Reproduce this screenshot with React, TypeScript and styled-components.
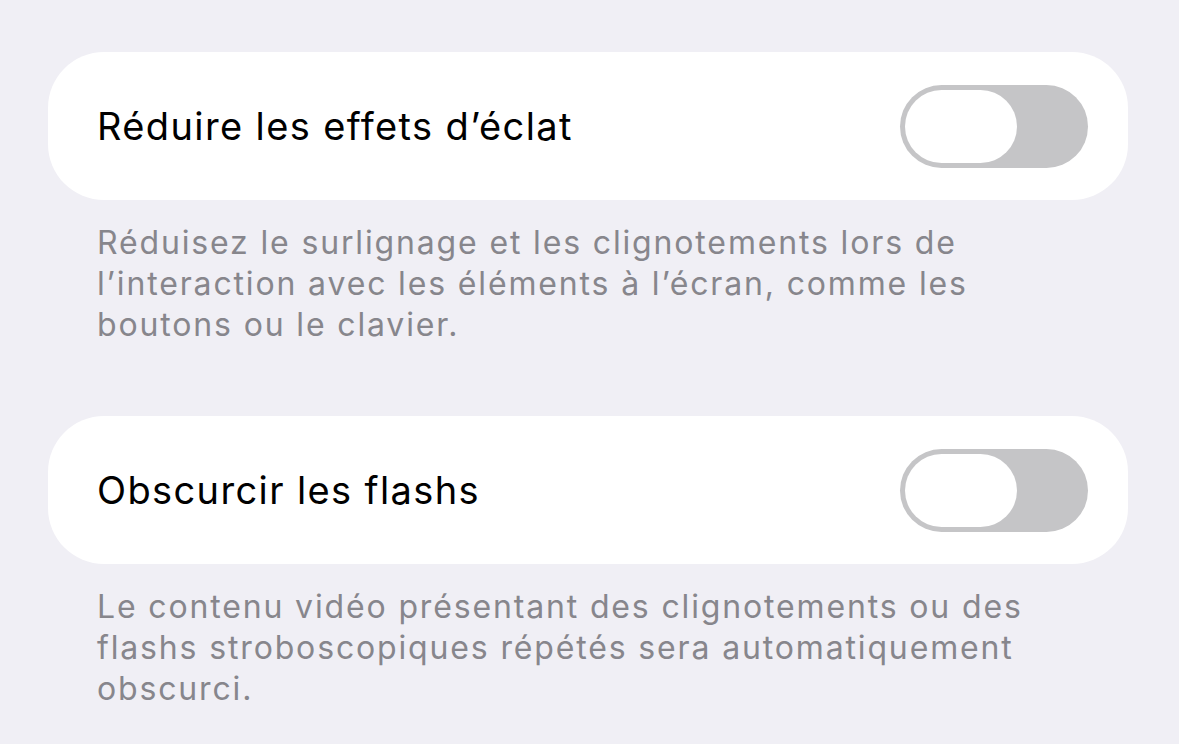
import React from "react";
import styled, { createGlobalStyle } from "styled-components";

const Global = createGlobalStyle`
  html, body { margin: 0; padding: 0; background: #f0eff5; }
  body { font-family: Inter, Roboto, "Noto Sans", sans-serif; -webkit-font-smoothing: antialiased; }
`;

const Page = styled.div`
  width: 1179px;
  height: 744px;
  overflow: hidden;
  background: #f0eff5;
  box-sizing: border-box;
  padding: 52px 51px 0 48px;
  display: flex;
  flex-direction: column;
`;

const Section = styled.section`
  display: flex;
  flex-direction: column;
  margin-bottom: 71px;
`;

const Card = styled.div`
  height: 148px;
  background: #ffffff;
  border-radius: 56px;
  display: flex;
  align-items: center;
  justify-content: space-between;
  padding: 0 40px 0 49px;
  box-sizing: border-box;
`;

const Title = styled.span`
  font-size: 38px;
  color: #000;
  letter-spacing: 1.38px;
`;

const Toggle = styled.div<{ $on?: boolean }>`
  width: 188px;
  height: 83px;
  border-radius: 42px;
  background: ${(p) => (p.$on ? "#34c759" : "#c5c5c7")};
  display: flex;
  align-items: center;
  padding: 5px;
  box-sizing: border-box;
  justify-content: ${(p) => (p.$on ? "flex-end" : "flex-start")};
`;

const Knob = styled.div`
  width: 112px;
  height: 73px;
  border-radius: 37px;
  background: #ffffff;
`;

const Footer = styled.p`
  margin: 22px 0 0 0;
  padding: 0 49px;
  font-size: 32px;
  line-height: 41px;
  color: #87868c;
  letter-spacing: 1.85px;
`;

const items = [
  {
    title: "Réduire les effets d’éclat",
    lines: [
      "Réduisez le surlignage et les clignotements lors de",
      "l’interaction avec les éléments à l’écran, comme les",
      "boutons ou le clavier.",
    ],
  },
  {
    title: "Obscurcir les flashs",
    lines: [
      "Le contenu vidéo présentant des clignotements ou des",
      "flashs stroboscopiques répétés sera automatiquement",
      "obscurci.",
    ],
  },
];

export default function App() {
  return (
    <>
      <Global />
      <Page>
        {items.map((it) => (
          <Section key={it.title}>
            <Card>
              <Title>{it.title}</Title>
              <Toggle role="switch" aria-checked={false}>
                <Knob />
              </Toggle>
            </Card>
            <Footer>
              {it.lines.map((l, i) => (
                <React.Fragment key={i}>
                  {l}
                  {i < it.lines.length - 1 && <br />}
                </React.Fragment>
              ))}
            </Footer>
          </Section>
        ))}
      </Page>
    </>
  );
}
